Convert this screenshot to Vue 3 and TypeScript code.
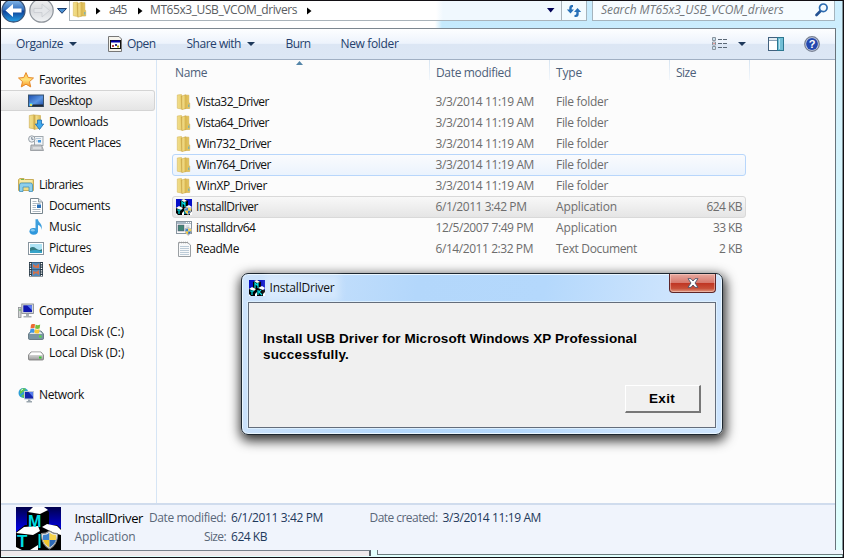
<script setup lang="ts">
interface NavItem {
  label: string
  icon: string
  width: number
  child?: boolean
  selected?: boolean
}

interface FileRow {
  name: string
  nameWidth: number
  icon: string
  date: string
  dateWidth: number
  type: string
  typeWidth: number
  size?: string
  sizeWidth?: number
  state?: 'hover' | 'selected'
}

// Tracks a label so that it takes up the given width in pixels, its last one being a margin.
const vFit = {
  mounted(el: HTMLElement, binding: { value: number }) {
    const natural = el.getBoundingClientRect().width
    const count = (el.textContent ?? '').length
    if (count > 0) {
      el.style.letterSpacing = `${(binding.value - 1 - natural) / count}px`
      el.style.marginRight = '1px'
    }
  },
}

const navGroups: NavItem[][] = [
  [
    { label: 'Favorites', icon: 'star', width: 48 },
    { label: 'Desktop', icon: 'desktop', width: 44, child: true, selected: true },
    { label: 'Downloads', icon: 'downloads', width: 60, child: true },
    { label: 'Recent Places', icon: 'recent', width: 73, child: true },
  ],
  [
    { label: 'Libraries', icon: 'libraries', width: 45 },
    { label: 'Documents', icon: 'documents', width: 62, child: true },
    { label: 'Music', icon: 'music', width: 33, child: true },
    { label: 'Pictures', icon: 'pictures', width: 43, child: true },
    { label: 'Videos', icon: 'videos', width: 36, child: true },
  ],
  [
    { label: 'Computer', icon: 'computer', width: 55 },
    { label: 'Local Disk (C:)', icon: 'disk-c', width: 76, child: true },
    { label: 'Local Disk (D:)', icon: 'disk-d', width: 76, child: true },
  ],
  [{ label: 'Network', icon: 'network', width: 46 }],
]

const folder = (name: string, nameWidth: number, state?: 'hover'): FileRow => ({
  name,
  nameWidth,
  icon: 'folder',
  date: '3/3/2014 11:19 AM',
  dateWidth: 99.5,
  type: 'File folder',
  typeWidth: 53,
  state,
})

const files: FileRow[] = [
  folder('Vista32_Driver', 74),
  folder('Vista64_Driver', 74),
  folder('Win732_Driver', 76),
  folder('Win764_Driver', 76, 'hover'),
  folder('WinXP_Driver', 72),
  { name: 'InstallDriver', nameWidth: 63, icon: 'mtk-shield', date: '6/1/2011 3:42 PM', dateWidth: 92, type: 'Application', typeWidth: 62, size: '624 KB', sizeWidth: 36.5, state: 'selected' },
  { name: 'installdrv64', nameWidth: 60.5, icon: 'program', date: '12/5/2007 7:49 PM', dateWidth: 99, type: 'Application', typeWidth: 62, size: '33 KB', sizeWidth: 30 },
  { name: 'ReadMe', nameWidth: 44, icon: 'notes', date: '6/14/2011 2:32 PM', dateWidth: 98.5, type: 'Text Document', typeWidth: 82, size: '2 KB', sizeWidth: 24 },
]
</script>

<template>
  <svg class="defs" width="0" height="0" aria-hidden="true">
    <defs>
      <linearGradient id="gFolderL" x1="0" x2="1"><stop offset="0" stop-color="#f1de8c" /><stop offset="1" stop-color="#ecd272" /></linearGradient>
      <linearGradient id="gFolder" x1="0" x2="1"><stop offset="0" stop-color="#c9a23c" /><stop offset=".35" stop-color="#f3de8a" /><stop offset="1" stop-color="#dcb950" /></linearGradient>
      <linearGradient id="gScreen" x1="0" y1="0" x2="1" y2="1"><stop offset="0" stop-color="#1c4fae" /><stop offset=".55" stop-color="#5b95e2" /><stop offset="1" stop-color="#1d4da5" /></linearGradient>
      <linearGradient id="gDisk" x1="0" y1="0" x2="0" y2="1"><stop offset="0" stop-color="#f4f4f4" /><stop offset="1" stop-color="#999" /></linearGradient>
      <linearGradient id="gStar" x1="0" y1="0" x2="0" y2="1"><stop offset="0" stop-color="#ffc44e" /><stop offset=".5" stop-color="#ffe27a" /><stop offset="1" stop-color="#f99322" /></linearGradient>
      <linearGradient id="gBlue" x1="0" y1="0" x2="0" y2="1"><stop offset="0" stop-color="#8fc0ee" /><stop offset=".48" stop-color="#2f6cbc" /><stop offset=".52" stop-color="#0d3f96" /><stop offset="1" stop-color="#27a3e8" /></linearGradient>
      <linearGradient id="gGrey" x1="0" y1="0" x2="0" y2="1"><stop offset="0" stop-color="#f3f3f4" /><stop offset=".5" stop-color="#d8dadd" /><stop offset="1" stop-color="#f2f4f6" /></linearGradient>
      <linearGradient id="gNight" x1="0" y1="0" x2="0" y2="1"><stop offset="0" stop-color="#00004c" /><stop offset=".55" stop-color="#0000e8" /></linearGradient>
    </defs>
    <symbol id="shield" viewBox="0 0 16 18">
      <path d="M8 0.500Q11 3 15.500 3Q16 13 8 17.500Q0 13 .5 3Q5 3 8 .5Z" fill="#eee" stroke="#888" />
      <path d="M8 2.200V9H2Q1.600 7 2 4.400Q5.500 4.200 8 2.200Z" fill="#3d82cc" />
      <path d="M8 2.200Q10.500 4.200 14 4.400Q14.400 7 14 9H8Z" fill="#f5d24c" />
      <path d="M2 9H8V16Q3 13 2 9Z" fill="#f3c62f" />
      <path d="M8 9H14Q13 13 8 16Z" fill="#2d69b5" />
    </symbol>
    <symbol id="folder" viewBox="0 0 16 16">
      <path d="M1.300 1 5.500 .5V15L1.300 14.200Z" fill="url(#gFolderL)" stroke="#d6b95c" stroke-width=".6" />
      <path d="M8.500 1.200H12.800V8.500L13.700 9V14.500H8Z" fill="#e2c25c" stroke="#d0ae4c" stroke-width=".6" />
      <path d="M5.200 2 10 .8V14.500L5.800 15.700Z" fill="url(#gFolder)" stroke="#c8a443" stroke-width=".5" />
      <path d="M12.800 10.500V13" stroke="#4fa8d8" stroke-width=".9" />
    </symbol>
    <symbol id="star" viewBox="0 0 16 16">
      <path d="M8 .6 10.200 5.500 15.500 6 11.500 9.600 12.700 14.900 8 12.200 3.300 14.900 4.500 9.600.5 6 5.800 5.500Z" fill="url(#gStar)" stroke="#e5892a" />
    </symbol>
    <symbol id="desktop" viewBox="0 0 16 16">
      <rect x=".5" y="2" width="15" height="11.500" fill="url(#gScreen)" stroke="#39536e" />
      <path d="M4 12.500H15" stroke="#222b36" stroke-width="2" />
      <circle cx="3" cy="11.500" r="1.700" fill="#4cc3e9" /><path d="M2 11h2v2h-2z" fill="#e4dd62" />
    </symbol>
    <symbol id="downloads" viewBox="0 0 16 16">
      <path d="M1.300 1.500 6 .8V14.800L1.300 14Z" fill="url(#gFolderL)" stroke="#c9a94e" stroke-width=".6" />
      <path d="M6 1 12.500 1.500V14L6 15.500Z" fill="url(#gFolder)" stroke="#c9a94e" stroke-width=".6" />
      <path d="M9.500 6H13.500V10H15.700L11.500 15.500 7.300 10H9.500Z" fill="#3fa9ee" stroke="#1e6cae" stroke-width=".8" />
    </symbol>
    <symbol id="recent" viewBox="0 0 16 16">
      <rect x="6.500" y="1.500" width="8.500" height="9" fill="#f2f5f8" stroke="#a0a8ae" /><path d="M8 3.500h5M8 6h2" stroke="#b4c8d8" /><rect x="10" y="5" width="3" height="2.500" fill="#3f95de" />
      <path d="M3 10h10.500l2 5.500h-13z" fill="#c3c6c9" stroke="#8e9398" stroke-width=".8" /><path d="M5 13h8" stroke="#f4f4f4" />
      <circle cx="3.800" cy="4" r="3.200" fill="#edf1f4" stroke="#98a0a7" /><path d="M3.800 2v2.300h1.700" stroke="#567" stroke-width=".8" fill="none" />
    </symbol>
    <symbol id="libraries" viewBox="0 0 16 16">
      <path d="M.5 13.500V2.500L2 1.500H6L7 2.500H15.500V13.500Z" fill="#f0dc83" stroke="#c8ad59" /><path d="M2 4h12" stroke="#fff7ca" /><path d="M3 2.500h3" stroke="#76b84f" />
      <path d="M1.500 14.500V8Q1.500 6 3.500 6H12.500Q14.500 6 14.500 8V14.500H11V10H5V14.500Z" fill="#8ed0ec" stroke="#4391ba" stroke-width=".8" />
    </symbol>
    <symbol id="documents" viewBox="0 0 16 16">
      <path d="M2.500.5H10.500L14.500 4V15.500H2.500Z" fill="#fff" stroke="#77858e" /><path d="M10.500.5V4H14.500" fill="#e0e6ea" stroke="#77858e" stroke-width=".8" />
      <path d="M4.500 3.500h4M4.500 5.500h8M4.500 7.500h3.500M4.500 9.500h3.500M4.500 11.500h8M4.500 13.500h8" stroke="#9aa8b4" stroke-width=".8" /><rect x="9" y="6.500" width="4" height="3.500" fill="#2870ba" />
    </symbol>
    <symbol id="music" viewBox="0 0 16 16">
      <ellipse cx="5.700" cy="12.300" rx="4.200" ry="3.400" fill="#2f97dc" /><ellipse cx="4.800" cy="11.300" rx="2" ry="1.200" fill="#85c9f2" />
      <path d="M7.500 12.500V.3H10C10 4 15.500 4.500 13.300 11 13.300 7.500 12 6.500 10 6V12.500Z" fill="#3e9fdd" />
    </symbol>
    <symbol id="pictures" viewBox="0 0 16 16">
      <rect x=".5" y="2.500" width="15" height="12" fill="#fff" stroke="#87949e" /><rect x="2" y="4" width="12" height="9" fill="#aee3f5" />
      <path d="M2 8Q5 6 8 8.500T14 9V13H2Z" fill="#347b83" /><path d="M2 11Q7 9 14 11.500V13H2Z" fill="#36a4c9" />
    </symbol>
    <symbol id="videos" viewBox="0 0 16 16">
      <rect x="1" y="1" width="14" height="14.500" fill="#263846" /><rect x="4" y="1.500" width="8" height="6.500" fill="#5189ba" /><rect x="4" y="8.500" width="8" height="6.500" fill="#5189ba" />
      <path d="M5 3 8 5 11 2.500V7H8L5 6ZM5 10 8 11 11 9V14L8 12 5 14Z" fill="#d2724c" /><path d="M2.500 2V15M13.500 2V15" stroke="#fff" stroke-width="1.400" stroke-dasharray="1.200 1.200" />
    </symbol>
    <symbol id="computer" viewBox="0 0 16 16">
      <rect x=".5" y="4.500" width="2.500" height="10" fill="#d2d4d5" stroke="#8a8f92" stroke-width=".8" /><path d="M1 7h2" stroke="#55ab55" />
      <rect x="3.800" y="1" width="11.700" height="9.500" fill="#d7dadd" stroke="#7e8489" stroke-width=".8" /><rect x="5.300" y="2.300" width="8.700" height="6.800" fill="#1018b0" /><path d="M9 2.300h5v5z" fill="#5e7ff0" />
      <path d="M8 11h3v2h2.500v1.500h-8V13H8z" fill="#aab0b4" />
    </symbol>
    <symbol id="disk-d" viewBox="0 0 16 16">
      <path d="M.5 10 3 7H13L15.500 10V14Q15.500 15 14.500 15H1.500Q.5 15 .5 14Z" fill="url(#gDisk)" stroke="#777" stroke-width=".8" /><path d="M1.500 10 3.500 7.500H12.500L14.500 10Z" fill="#fff" />
      <rect x="11" y="11.500" width="2.500" height="2" fill="#37c631" />
    </symbol>
    <symbol id="disk-c" viewBox="0 0 16 16">
      <path d="M.5 10 3 7H13L15.500 10V14Q15.500 15.500 14.500 15.500H1.500Q.5 15.500 .5 14Z" fill="#7a95a3" stroke="#566b76" stroke-width=".8" /><path d="M1.500 10 3.500 7.500H12.500L14.500 10Z" fill="#dfe6e9" /><rect x="11" y="11.500" width="2.500" height="2" fill="#50e43c" />
      <path d="M3 .8Q5 -.7 7 .3L6.500 4.300Q4.500 3.500 2.500 4.500Z" fill="#ee6a32" /><path d="M7.600 .5Q9.500 1.700 12.200 .6L11.600 4.600Q9 5.300 7.100 4.500Z" fill="#77be3b" /><path d="M2.400 5.200Q4.500 4.200 6.400 4.900L5.800 9Q4 8.200 1.800 9Z" fill="#3f97e5" /><path d="M7 5.200Q9 6.100 11.500 5.300L10.900 9.200Q8.500 9.800 6.400 9Z" fill="#fbc732" />
    </symbol>
    <symbol id="network" viewBox="0 0 16 16">
      <circle cx="5.500" cy="6" r="5" fill="#2d9fd5" /><path d="M2 3Q5 0 8 2L5 5 2 7.500ZM3 9 6 7V11Z" fill="#61c653" /><path d="M3 3.500 5 2" stroke="#e1f5ee" />
      <rect x="6.500" y="4.500" width="9" height="7.500" fill="#1325ac" stroke="#c0c9d5" /><path d="M10.500 5h4.500v5z" fill="#557cec" /><path d="M10 12.500h2.500V14H14v1.500H8.500V14H10z" fill="#9aa5ad" />
    </symbol>
    <symbol id="mtk" viewBox="0 0 45 43">
      <rect width="45" height="43" fill="url(#gNight)" />
      <path d="M11 5 17 0H28L33 5V25H11Z" fill="#000" /><path d="M12 5 17 0H28L32 3 24 7Z" fill="#fff" />
      <path d="M0 25 9 18H22V43H0ZM22 25 30 18H41L45 22V43H22Z" fill="#000" /><path d="M0 26 8 20 22 19 24 24 17 28ZM26 20 31 17 41 19 45 23V28L38 26ZM0 43V40L6 43ZM14 43 22 38V43Z" fill="#fff" />
    </symbol>
    <symbol id="mtk-small" viewBox="0 0 16 16">
      <rect width="16" height="16" fill="#0610c8" /><path d="M4 2 8 0 12 2V9L16 10V16H0V9L4 7Z" fill="#000" />
      <path d="M5 1 8 0 11 2 8 3ZM0 9 3 7 7 9 5 11ZM9 8 13 6 16 8 14 10ZM0 14 2 16H0ZM6 14 8 12V16H6ZM14 14 16 12V16H14Z" fill="#fff" />
      <path d="M6 8V3L8 5 9 3V8M1 11H5M3 11V15M9 10V15M12 10 10 12 13 15" stroke="#00dce4" stroke-width="1.200" fill="none" />
    </symbol>
    <symbol id="mtk-shield" viewBox="0 0 16 16">
      <use href="#mtk-small" width="16" height="16" /><use href="#shield" x="8" y="7.500" width="8" height="8.500" />
    </symbol>
    <symbol id="program" viewBox="0 0 16 16">
      <rect x=".5" y="1.500" width="15" height="12" fill="#fafafa" stroke="#8895a0" /><path d="M1 3h14" stroke="#a9b9c6" stroke-width="2" /><path d="M10 2.500h1M12 2.500h1M14 2.500h1" stroke="#fff" />
      <rect x="2" y="5" width="6" height="6" fill="#438575" stroke="#557" stroke-width=".5" /><path d="M9.500 6h4M9.500 8h4" stroke="#b8c3cd" /><use href="#shield" x="8.500" y="7" width="7.500" height="9" />
    </symbol>
    <symbol id="notes" viewBox="0 0 16 16">
      <path d="M2.500 1.500H11.500L14.500 4V15.500H2.500Z" fill="#f8f9fa" stroke="#9a9fa3" /><path d="M3 1.500H12" stroke="#999" stroke-dasharray="1 1" stroke-width="1.600" />
      <path d="M4 5.500h9M4 7.500h9M4 9.500h9M4 11.500h9M4 13.500h9" stroke="#b4c5d2" stroke-width=".9" />
    </symbol>
  </svg>

  <main class="screen">
    <header class="address-row">
      <svg class="history" width="68" height="24" viewBox="0 0 68 24">
        <circle cx="12.500" cy="10.500" r="11.500" fill="url(#gBlue)" stroke="#3b5478" stroke-width="1.300" />
        <path d="M4.500 10.500 12 4V8.500H20.500V12.500H12V17Z" fill="#fff" />
        <circle cx="40.500" cy="10.500" r="11.700" fill="url(#gGrey)" stroke="#8e949b" stroke-width="1.200" />
        <path d="M33 8.500H41V4L48.500 10.500 41 17V12.500H33Z" fill="#e4e6e9" stroke="#c5c9ce" stroke-width=".7" />
        <path d="M56.500 8.500H65.500L61 13.300Z" fill="#4a90d2" stroke="#17396b" />
      </svg>
      <div class="breadcrumbs">
        <svg class="crumb-folder" width="16" height="17"><use href="#folder" /></svg>
        <svg class="arrow" width="5" height="8"><path d="M0 .5 4.500 4 0 7.500Z" /></svg>
        <span v-fit="18.500">a45</span>
        <svg class="arrow second" width="5" height="8"><path d="M0 .5 4.500 4 0 7.500Z" /></svg>
        <span v-fit="148">MT65x3_USB_VCOM_drivers</span>
        <svg class="arrow third" width="5" height="8"><path d="M0 .5 4.500 4 0 7.500Z" /></svg>
        <svg class="drop" width="8" height="5"><path d="M0 0H7.500L3.700 4.500Z" fill="#000055" /></svg>
      </div>
      <div class="refresh">
        <svg width="16" height="14" viewBox="0 0 16 14"><path d="M7 1H5.500Q3.300 1 3.300 3.500V5.500H.8L4.500 9.500 8 5.500H5.700V4Q5.700 3.200 7 3ZM8.500 13H10Q12.700 13 12.700 10V8H15.200L11.500 4 8 8H10.300V10Q10.300 10.800 8.500 11Z" fill="#2670b8" /></svg>
      </div>
      <div class="search">
        <span v-fit="183.500">Search MT65x3_USB_VCOM_drivers</span>
        <svg width="14" height="14" viewBox="0 0 14 14"><path d="M6 7.500 1.500 12" stroke="#245293" stroke-width="2.600" stroke-linecap="round" /><circle cx="8.300" cy="4.800" r="3.800" fill="#f4faff" stroke="#2c6bb0" stroke-width="1.700" /></svg>
      </div>
    </header>

    <section class="window">
      <nav class="commands">
        <span v-fit="48">Organize</span><i class="caret" />
        <svg class="open-icon" width="14" height="16"><path d="M.5.5H11L13.500 3V15.500H.5Z" fill="#f6f4ed" stroke="#777" /><rect x="2.500" y="4.500" width="10" height="8" fill="#fff" stroke="#111" /><path d="M3 5.500h9" stroke="#00a" stroke-width="2" /><path d="M4 9h2v2H4z" fill="#b44" /><path d="M7 8h2v2H7z" fill="#338" /><path d="M9 9.500h2v2H9z" fill="#b3a321" /></svg>
        <span v-fit="29.500">Open</span>
        <span v-fit="55.500" class="share">Share with</span><i class="caret" />
        <span v-fit="26" class="burn">Burn</span>
        <span v-fit="59" class="new">New folder</span>
        <svg class="view" width="16" height="14"><path d="M.5.5h3v3h-3zM.5 5h3v3h-3zM.5 9.500h3v3h-3z" fill="#fff" stroke="#8a949e" /><path d="M1.500 2h1M1.500 11h1" stroke="#38b" /><path d="M1.500 6.500h1" stroke="#c33" /><path d="M6 2.500h4M11 2.500h4M6 6.500h4M11 6.500h4M6 10.500h4M11 10.500h4" stroke="#5b6876" /></svg>
        <i class="caret" />
        <svg class="preview" width="16" height="14"><rect x=".5" y=".5" width="15" height="13" fill="#fff" stroke="#42617e" /><path d="M1 2H15" stroke="#d8e4ed" stroke-width="1.500" /><path d="M1 3.500H9" stroke="#8ca1b5" /><rect x="9.500" y=".5" width="6" height="13" fill="#72bfd6" stroke="#2d7790" /><path d="M11.500 2v10" stroke="#b9e4ee" /></svg>
        <svg class="help" width="16" height="16" viewBox="0 0 16 16"><circle cx="8" cy="8" r="7.300" fill="#c8d1e5" stroke="#777f91" stroke-width="1.200" /><circle cx="8" cy="8" r="5.900" fill="#2448ae" /><text x="8" y="12" text-anchor="middle" font-family="Liberation Sans" font-size="11" font-weight="bold" fill="#fff">?</text></svg>
      </nav>

      <div class="body">
        <aside class="tree">
          <div v-for="(group, g) in navGroups" :key="g" class="group">
            <div v-for="item in group" :key="item.label" class="node" :class="{ child: item.child, active: item.selected }">
              <svg width="16" height="16"><use :href="`#${item.icon}`" /></svg>
              <span v-fit="item.width">{{ item.label }}</span>
            </div>
          </div>
        </aside>

        <div class="list">
          <div class="columns">
            <div class="column name"><span v-fit="33">Name</span><svg class="sort" width="7" height="4"><path d="M0 4 3.500 0 7 4Z" fill="#5485a8" /></svg></div>
            <div class="column"><span v-fit="76">Date modified</span></div>
            <div class="column"><span v-fit="27">Type</span></div>
            <div class="column size"><span v-fit="21">Size</span></div>
          </div>
          <div class="rows">
            <div v-for="file in files" :key="file.name" class="row" :class="file.state">
              <svg width="16" height="16"><use :href="`#${file.icon}`" /></svg>
              <div class="file-name"><span v-fit="file.nameWidth">{{ file.name }}</span></div>
              <div><span v-fit="file.dateWidth">{{ file.date }}</span></div>
              <div><span v-fit="file.typeWidth">{{ file.type }}</span></div>
              <div class="file-size"><span v-if="file.size" v-fit="file.sizeWidth">{{ file.size }}</span></div>
            </div>
          </div>
        </div>
      </div>

      <footer class="details">
        <svg class="big-icon" width="45" height="43">
          <use href="#mtk" width="45" height="43" />
          <text x="12" y="20" font-family="Liberation Sans" font-weight="bold" font-size="16" fill="#00dce4">M</text>
          <text x="1" y="40" font-family="Liberation Sans" font-weight="bold" font-size="17" fill="#00dce4">T</text>
          <path d="M23.500 27V41" stroke="#00dce4" stroke-width="2" />
          <use href="#shield" x="25" y="23" width="17" height="20" />
        </svg>
        <div class="stack main-stack"><strong v-fit="69.500">InstallDriver</strong><span v-fit="62">Application</span></div>
        <div class="stack labels"><span v-fit="78">Date modified:</span><span v-fit="23">Size:</span></div>
        <div class="stack values"><span v-fit="93">6/1/2011 3:42 PM</span><span v-fit="37">624 KB</span></div>
        <div class="stack created"><span v-fit="69">Date created:</span></div>
        <div class="stack values"><span v-fit="99.500">3/3/2014 11:19 AM</span></div>
      </footer>
    </section>
    <div class="below"><div class="below-left" /><div class="below-gap" /><div class="below-right" /></div>

    <section class="dialog">
      <header class="title">
        <svg width="16" height="16"><use href="#mtk-small" /></svg>
        <span v-fit="66">InstallDriver</span>
        <button class="close" aria-label="Close"><svg width="12" height="10" viewBox="0 0 12 10"><path d="M1 .7H4L6 3 8 .7H11L8 5 11 9.300H8L6 7 4 9.300H1L4 5Z" fill="#fff" stroke="#4d5269" stroke-width=".9" /></svg></button>
      </header>
      <div class="client">
        <p><span v-fit="375">Install USB Driver for Microsoft Windows XP Professional</span><br><span v-fit="87">successfully.</span></p>
        <button class="exit"><span v-fit="27">Exit</span></button>
      </div>
    </section>
  </main>
</template>

<style>
body { margin: 0; overflow: hidden; }
</style>

<style scoped>
* { box-sizing: border-box; }
.defs { position: absolute; }
.screen {
  position: relative; width: 844px; height: 558px; overflow: hidden;
  display: flex; flex-direction: column;
  border: 1px solid #120f14;
  background: linear-gradient(#d0effc, #e0fffd);
  box-shadow: inset -1px 0 #7f9298;
  font: 12px/16px "Open Sans", "Noto Sans", sans-serif; color: #111; white-space: nowrap;
}
.screen svg { flex: none; display: block; }
.screen span, .screen strong { display: inline-block; }
.address-row { height: 27px; width: 841px; display: flex; align-items: flex-start; background: linear-gradient(90deg, #fff 0 434px, #c5eafd 441px, #cdeefd 100%); }
.history { margin-top: -1px; margin-left: 0; }
.breadcrumbs { width: 493px; height: 20px; display: flex; align-items: center; color: #5a5d62; background: linear-gradient(90deg, #fff 0 366px, #f0f8fe 373px); border: 1px solid #a9b3ba; border-top: 0; }
.crumb-folder { margin-left: 2px; margin-top: -3px; }
.arrow { margin-left: 8px; margin-right: 8px; }
.arrow.second { margin-left: 10px; margin-right: 7.500px; }
.arrow.third { margin-left: 9px; }
.drop { margin-left: auto; margin-right: 6px; }
.breadcrumbs span { margin-top: -2px; }
.refresh { width: 25px; height: 20px; padding: 3px 0 0 4px; background: #f3fbff; border: 1px solid #a5b4bd; border-width: 0 1px 1px 0; }
.search { margin-left: 5px; width: 243px; height: 20px; padding: 0 5px 2px 8px; display: flex; align-items: center; justify-content: space-between; border: 1px solid #a5b4bd; border-top: 0; background: #f7fcff; color: #73777b; font-style: italic; }
.window { width: 835px; height: 523px; border-top: 1px solid #7d8790; border-right: 1px solid #68737b; display: flex; flex-direction: column; background: #fcfcfc; }
.commands { height: 31px; display: flex; align-items: center; padding-left: 15px; color: #253f6c; background: linear-gradient(#fdfeff 0, #edf3fc 48%, #dce6f4 50%, #dce7f5 100%); border-bottom: 1px solid #a0afc3; }
.caret { width: 0; height: 0; border: 4px solid transparent; border-top: 4px solid #1e395b; border-bottom: 0; margin-left: 4.500px; }
.open-icon { margin-left: 31.500px; margin-right: 5px; }
.share { margin-left: 30px; }
.burn { margin-left: 31px; }
.new { margin-left: 29px; }
.view { margin-left: auto; }
.view + .caret { margin-left: 10px; }
.preview { margin-left: 22px; }
.help { margin-left: 20px; margin-right: 15px; }
.body { flex: 1; display: flex; min-height: 0; }
.tree { width: 156px; padding-top: 9px; border-right: 1px solid #d6e5f5; }
.group { margin-bottom: 21px; }
.node { height: 21px; display: flex; align-items: center; gap: 5px; padding-left: 17px; }
.node.child { padding-left: 27px; }
.node.active { width: 154px; background: linear-gradient(#f8f8f8, #e5e5e5); border: 1px solid #d4d4d4; border-left: 0; border-radius: 0 3px 3px 0; }
.list { flex: 1; padding-left: 15px; }
.columns { display: grid; grid-template-columns: 258px 120px 120px 80px; height: 31px; color: #4c607a; }
.column { position: relative; height: 20px; padding: 5px 0 0 6px; border-right: 1px solid; border-image: linear-gradient(#d5e3f1, #f4f8fc) 1; }
.column.name { padding-left: 3px; }
.sort { position: absolute; left: 124px; top: 1px; }
.row { display: grid; grid-template-columns: 20px 239.500px 120.500px 120px 67px; width: 574px; height: 22px; margin-bottom: -1px; padding-left: 3px; align-items: center; color: #6d6d6d; border: 1px solid transparent; border-radius: 3px; }
.file-name { color: #111; }
.file-size { text-align: right; }
.hover { border-color: #b8d6fb; background: linear-gradient(#fafbfd, #ebf3fd); }
.selected { border-color: #d9d9d9; background: linear-gradient(#f8f8f8, #e5e5e5); }
.details { height: 48px; padding: 3px 0 0 15px; display: flex; align-items: flex-start; background: #f0f4fc; border-top: 2px solid #d0dced; color: #5a6779; }
.big-icon { margin-top: -1px; }
.stack { display: flex; flex-direction: column; align-items: flex-start; padding-top: 2px; gap: 3px; }
.main-stack { margin-left: 13.500px; }
.main-stack strong { font-weight: 400; font-size: 13px; color: #000; }
.labels { margin-left: 5px; width: 78px; align-items: flex-end; }
.values { margin-left: 4px; color: #1e395b; }
.created { margin-left: 45.500px; }
.below { display: flex; height: 6px; margin-top: -1px; }
.below-left { width: 370px; border-top: 1px solid #77818c; border-right: 2px solid #555f66; background: #eee9ec; }
.below-gap { width: 6px; background: #e3fffc; }
.below-right { flex: 1; height: 5px; background: #f0f4fc; border-left: 1px solid #6b7b7d; border-bottom: 1px solid #6b7b7d; }
.dialog { position: absolute; left: 240px; top: 272px; width: 482px; height: 162px; border: 1px solid #1d2730; border-radius: 7px; padding: 0 6px 6px; display: flex; flex-direction: column; background: linear-gradient(100deg, #cfe4fc, #b3d7fb 35%, #b4d8fc 60%, #cde4fd 85%); box-shadow: inset 0 0 0 1px #eaf6ff, 1px 4px 12px 2px rgba(0, 0, 0, .8); }
.title { height: 28px; display: flex; align-items: flex-start; padding: 6px 0 0 1px; }
.title span { margin-left: 4.500px; background: rgba(255,255,255,.3); box-shadow: 0 0 7px 5px rgba(255,255,255,.3); }
.close { margin: -6px 0 0 auto; width: 47px; height: 19px; padding: 0 0 1px; display: flex; align-items: center; justify-content: center; border: 1px solid #5d2528; border-top: 0; border-radius: 0 0 4px 4px; background: linear-gradient(#e8aaa0, #d7796d 48%, #bf3422 50%, #c84f38 80%, #e09a83); box-shadow: inset 0 0 0 1px rgba(255,220,210,.45); }
.client { flex: 1; display: flex; flex-direction: column; border: 1px solid #646d7b; background: #f0f0f0; padding: 28px 14px 14px; box-shadow: 0 0 0 1px #dceffe; font: bold 13.500px/16px "Liberation Sans", sans-serif; color: #000; }
.client p { margin: 0; }
.exit { width: 76px; height: 28px; margin: auto 0 0 auto; padding: 0; font: inherit; color: #000; background: #f0f0f0; border: solid; border-width: 1px 2px 2px 1px; border-color: #fff #777 #777 #fff; }
</style>
